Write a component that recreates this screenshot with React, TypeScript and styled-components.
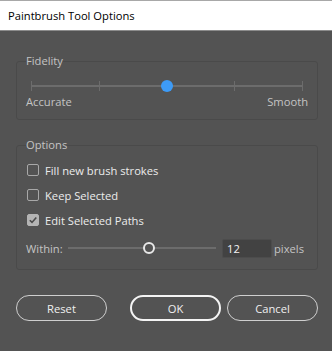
import React from 'react'
import styled, { createGlobalStyle } from 'styled-components'

const GlobalStyle = createGlobalStyle`
  html, body {
    margin: 0;
    padding: 0;
    background: #535353;
  }
  * {
    box-sizing: border-box;
  }
`

const FONT = `"Open Sans", "Noto Sans", "Liberation Sans", sans-serif`
const SIZE = '11.2px'

const App = () => {
  return (
    <>
      <GlobalStyle />
      <Window>
        <TitleBar>Paintbrush Tool Options</TitleBar>
        <Body>
          <Group>
            <Legend>Fidelity</Legend>
            <FidelitySlider>
              <Ticks>
                <Tick />
                <Tick />
                <Tick />
                <Tick />
                <Tick />
              </Ticks>
              <BlueKnob style={{ left: '50%' }} />
            </FidelitySlider>
            <Ends>
              <span>Accurate</span>
              <span>Smooth</span>
            </Ends>
          </Group>

          <Group $top={17}>
            <Legend>Options</Legend>
            <Rows>
              <CheckRow>
                <Box />
                <span>Fill new brush strokes</span>
              </CheckRow>
              <CheckRow>
                <Box />
                <span>Keep Selected</span>
              </CheckRow>
              <CheckRow>
                <Box $checked>
                  <svg width="10" height="10" viewBox="0 0 10 10">
                    <path d="M1.8 5.2 L4 7.4 L8.3 2.4" fill="none" stroke="#4a4a4a" strokeWidth="1.6" />
                  </svg>
                </Box>
                <span>Edit Selected Paths</span>
              </CheckRow>
              <WithinRow>
                <WithinLabel>Within:</WithinLabel>
                <SmallSlider>
                  <RingKnob style={{ left: '55%' }} />
                </SmallSlider>
                <NumberBox>12</NumberBox>
                <Dim>pixels</Dim>
              </WithinRow>
            </Rows>
          </Group>

          <Buttons>
            <Button>Reset</Button>
            <Spacer />
            <Button $primary>OK</Button>
            <Button>Cancel</Button>
          </Buttons>
        </Body>
      </Window>
    </>
  )
}

export default App

const Window = styled.div`
  width: 332px;
  height: 351px;
  background: #535353;
  display: flex;
  flex-direction: column;
  font-family: ${FONT};
  font-size: ${SIZE};
  overflow: hidden;
`
const TitleBar = styled.div`
  height: 31px;
  background: #ffffff;
  border-top: 1px solid #a8a8a8;
  border-bottom: 1px solid #8c8c8c;
  padding-left: 8px;
  display: flex;
  align-items: center;
  color: #000;
`
const Body = styled.div`
  padding: 22px 15px 0 16px;
  display: flex;
  flex-direction: column;
`
const Group = styled.fieldset<{ $top?: number }>`
  margin: ${p => p.$top || 0}px 0 0 0;
  width: 302px;
  padding: 0 9px 9px 9px;
  border: 1px solid #4a4a4a;
  border-radius: 3px;
  min-width: 0;
`
const Legend = styled.legend`
  padding: 0;
  line-height: 16px;
  color: #c4c4c4;
`
const FidelitySlider = styled.div`
  position: relative;
  height: 12px;
  margin: 11px 5px 2px 5px;
  display: flex;
  align-items: center;
`
const Ticks = styled.div`
  flex: 1;
  height: 2px;
  background: #6c6c6c;
  display: flex;
  justify-content: space-between;
  align-items: center;
`
const Tick = styled.div`
  width: 1px;
  height: 10px;
  background: #6c6c6c;
`
const BlueKnob = styled.div`
  position: absolute;
  top: 0;
  width: 12px;
  height: 12px;
  margin-left: -6px;
  border-radius: 50%;
  background: #3d9bf7;
`
const Ends = styled.div`
  display: flex;
  justify-content: space-between;
  line-height: 16px;
  color: #c4c4c4;
`
const Rows = styled.div`
  display: flex;
  flex-direction: column;
  gap: 9px;
  padding-top: 9px;
  padding-bottom: 2px;
`
const CheckRow = styled.div`
  display: flex;
  align-items: center;
  gap: 6px;
  height: 16px;
  color: #ececec;
  padding-left: 1px;
`
const Box = styled.div<{ $checked?: boolean }>`
  width: 12px;
  height: 12px;
  border: 1px solid ${p => (p.$checked ? '#b4b4b4' : '#a8a8a8')};
  border-radius: 2px;
  background: ${p => (p.$checked ? '#b4b4b4' : 'transparent')};
  display: flex;
  align-items: center;
  justify-content: center;
`
const WithinRow = styled.div`
  display: flex;
  align-items: center;
  height: 20px;
  margin-top: 1px;
`
const Dim = styled.span`
  color: #c4c4c4;
`
const WithinLabel = styled(Dim)`
  width: 42px;
`
const SmallSlider = styled.div`
  position: relative;
  width: 148px;
  height: 2px;
  margin-right: 6px;
  background: #6c6c6c;
`
const RingKnob = styled.div`
  position: absolute;
  top: -5px;
  width: 12px;
  height: 12px;
  margin-left: -6px;
  border-radius: 50%;
  border: 2px solid #e8e8e8;
  background: #535353;
`
const NumberBox = styled.div`
  width: 50px;
  height: 19px;
  background: #424242;
  border: 1px solid #4c4c4c;
  border-radius: 2px;
  color: #f4f4f4;
  padding-left: 4px;
  margin-right: 2px;
  line-height: 17px;
`
const Buttons = styled.div`
  display: flex;
  margin-top: 25px;
  width: 302px;
  gap: 6px;
`
const Spacer = styled.div`
  flex: 1;
`
const Button = styled.button<{ $primary?: boolean }>`
  width: 91px;
  height: 26px;
  border-radius: 13px;
  background: transparent;
  border: ${p => (p.$primary ? '2px solid #f4f4f4' : '1.5px solid #cfcfcf')};
  color: #f0f0f0;
  font-family: ${FONT};
  font-size: ${SIZE};
  padding: 0;
`
